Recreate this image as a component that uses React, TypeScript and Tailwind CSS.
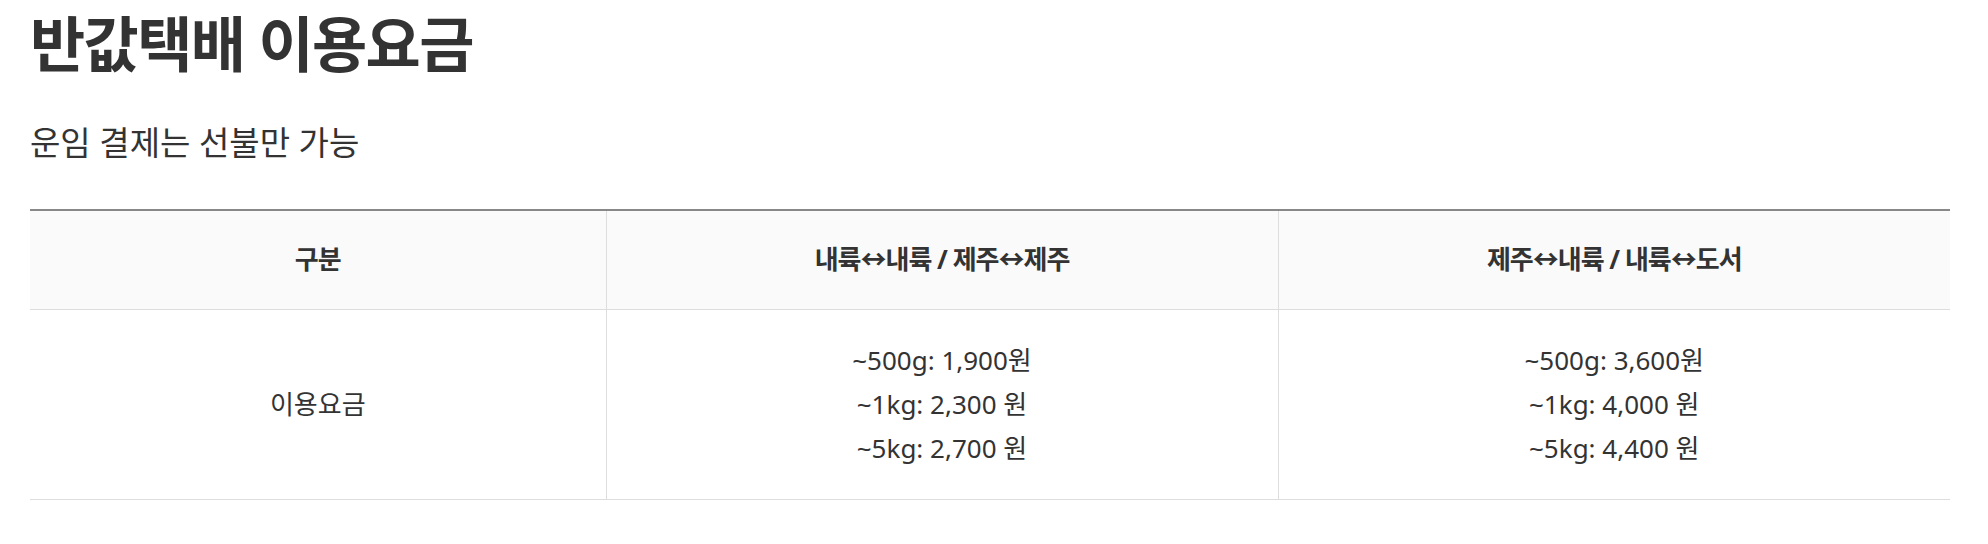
const font = { fontFamily: '"Noto Sans", "Noto Sans CJK KR", sans-serif' };

const rates = [
  {
    title: '내륙↔내륙 / 제주↔제주',
    lines: ['~500g: 1,900원', '~1kg: 2,300 원', '~5kg: 2,700 원'],
  },
  {
    title: '제주↔내륙 / 내륙↔도서',
    lines: ['~500g: 3,600원', '~1kg: 4,000 원', '~5kg: 4,400 원'],
  },
];

export default function App() {
  return (
    <div className="min-h-screen bg-white px-[30px] text-[#333]" style={font}>
      <h1 className="pt-[14px] text-[60px] leading-[60px] font-bold tracking-[-1.6px]">반값택배 이용요금</h1>
      <p className="mt-[52px] text-[33px] leading-[33px]">운임 결제는 선불만 가능</p>

      <table className="mt-[50px] w-[1920px] table-fixed border-collapse border-t-2 border-t-[#888]">
        <colgroup>
          <col className="w-[30%]" />
          <col className="w-[35%]" />
          <col className="w-[35%]" />
        </colgroup>
        <thead>
          <tr className="h-[99px] bg-[#fafafa] border-b border-b-[#ddd]">
            <th className="text-[26px] font-bold tracking-[-1px]">구분</th>
            {rates.map((r) => (
              <th key={r.title} className="border-l border-l-[#ddd] text-[26px] font-bold tracking-[-1px]">
                {r.title}
              </th>
            ))}
          </tr>
        </thead>
        <tbody>
          <tr className="h-[190px] border-b border-b-[#ddd]">
            <td className="text-center text-[26px]">이용요금</td>
            {rates.map((r) => (
              <td key={r.title} className="border-l border-l-[#ddd] text-center text-[26px] leading-[44px]">
                {r.lines.map((l) => (
                  <div key={l}>{l}</div>
                ))}
              </td>
            ))}
          </tr>
        </tbody>
      </table>
    </div>
  );
}
